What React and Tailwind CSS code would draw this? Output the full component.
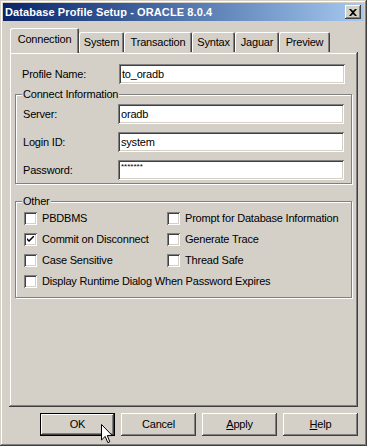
import React from "react";

// classic win2000 bevels
const raised =
  "shadow-[inset_-1px_-1px_#404040,inset_1px_1px_#d4d0c8,inset_-2px_-2px_#808080,inset_2px_2px_#ffffff]";
const btnRaised =
  "shadow-[inset_-1px_-1px_#404040,inset_1px_1px_#ffffff,inset_-2px_-2px_#808080,inset_2px_2px_#d4d0c8]";
const sunken =
  "shadow-[inset_1px_1px_#808080,inset_-1px_-1px_#ffffff,inset_2px_2px_#404040,inset_-2px_-2px_#d4d0c8]";

const tabs = [
  { label: "Connection", w: "w-[69px] ml-[1px]", active: true },
  { label: "System", w: "w-[45px]" },
  { label: "Transaction", w: "w-[68px]" },
  { label: "Syntax", w: "w-[43px]" },
  { label: "Jaguar", w: "w-[44px]" },
  { label: "Preview", w: "w-[51px]" },
];

function Field({ label, value, small, labelW = "w-[95px]" }) {
  return (
    <div className="flex items-center h-[20px]">
      <div className={`${labelW} shrink-0`}>{label}</div>
      <div className={`w-[226px] h-[20px] bg-white ${sunken} flex items-center pl-[3px]`}>
        {small ? (
          <span className="text-[8px] leading-none -mt-[6px] tracking-[0px]">{value}</span>
        ) : (
          <span>{value}</span>
        )}
      </div>
    </div>
  );
}

function Check({ label, checked, w = "w-[143px]" }) {
  return (
    <div className={`flex items-center ${w} shrink-0`}>
      <div className={`w-[13px] h-[13px] bg-white ${sunken} flex items-center justify-center shrink-0`}>
        {checked && (
          <svg width="7" height="7" viewBox="0 0 7 7">
            <path d="M0 2 L0 4 L2 6 L7 1 L7 -1 L2 4 Z" fill="#000" />
          </svg>
        )}
      </div>
      <span className="ml-[5px] whitespace-nowrap">{label}</span>
    </div>
  );
}

function Group({ title, children, className = "" }) {
  return (
    <div
      className={`ml-[6px] w-[337px] border border-[#808080] shadow-[1px_1px_0_#ffffff,inset_1px_1px_0_#ffffff] ${className}`}
    >
      <div className="-mt-[7px] ml-[6px] px-[1px] w-fit bg-[#d4d0c8] leading-[13px]">{title}</div>
      {children}
    </div>
  );
}

function Button({ children, def }) {
  if (def) {
    return (
      <div className="w-[75px] h-[23px] border border-black">
        <div className={`w-full h-full ${btnRaised} flex items-center justify-center`}>{children}</div>
      </div>
    );
  }
  return (
    <div className={`w-[75px] h-[23px] ${btnRaised} flex items-center justify-center`}>{children}</div>
  );
}

export default function App() {
  return (
    <div
      className={`relative w-[367px] h-[446px] bg-[#d4d0c8] ${raised} p-[3px] flex flex-col font-['Liberation_Sans',Arial,sans-serif] text-[11px] tracking-[-0.2px] text-black leading-[13px]`}
    >
      {/* title bar */}
      <div className="h-[18px] bg-linear-to-r from-[#0a246a] to-[#a6caf0] flex items-center justify-between pl-[2px] pr-[3px]">
        <span className="text-white font-bold text-[11px] tracking-[0.1px]">
          Database Profile Setup - ORACLE 8.0.4
        </span>
        <div className={`w-[16px] h-[14px] bg-[#d4d0c8] ${btnRaised} flex items-center justify-center`}>
          <svg width="8" height="7" viewBox="0 0 8 7">
            <path d="M0 0 L2 0 L4 2 L6 0 L8 0 L5 3.5 L8 7 L6 7 L4 5 L2 7 L0 7 L3 3.5 Z" fill="#000" />
          </svg>
        </div>
      </div>

      <div className="flex flex-col px-[6px]">
        {/* tabs */}
        <div className="relative z-10 -mb-[1px] mt-[7px] h-[25px] flex items-end">
          {tabs.map((t) =>
            t.active ? (
              <div
                key={t.label}
                className={`${t.w} h-[25px] bg-[#d4d0c8] shadow-[inset_1px_1px_#ffffff,inset_-1px_0_#404040,inset_-2px_0_#808080] rounded-t-[2px] flex items-start justify-center pt-[5px]`}
              >
                {t.label}
              </div>
            ) : (
              <div
                key={t.label}
                className={`${t.w} h-[20px] mb-[1px] shadow-[inset_1px_1px_#ffffff,inset_-1px_0_#404040,inset_-2px_0_#808080] rounded-t-[2px] flex items-start justify-center pt-[4px]`}
              >
                {t.label}
              </div>
            )
          )}
        </div>

        {/* panel */}
        <div className={`h-[355px] ${raised} flex flex-col pt-[12px]`}>
          <div className="pl-[13px]">
            <Field label="Profile Name:" value="to_oradb" labelW="w-[97px]" />
          </div>

          <Group title="Connect Information" className="mt-[10px] pb-[3px]">
            <div className="pl-[7px] mt-[3px] flex flex-col gap-[8px]">
              <Field label="Server:" value="oradb" />
              <Field label="Login ID:" value="system" />
              <Field label="Password:" value="*******" small />
            </div>
          </Group>

          <Group title="Other" className="mt-[17px] pb-[5px]">
            <div className="pl-[8px] flex flex-col">
              <div className="h-[21px] flex items-center">
                <Check label="PBDBMS" />
                <Check label="Prompt for Database Information" />
              </div>
              <div className="h-[21px] flex items-center">
                <Check label="Commit on Disconnect" checked />
                <Check label="Generate Trace" />
              </div>
              <div className="h-[21px] flex items-center">
                <Check label="Case Sensitive" />
                <Check label="Thread Safe" />
              </div>
              <div className="h-[21px] flex items-center">
                <Check label="Display Runtime Dialog When Password Expires" w="w-auto" />
              </div>
            </div>
          </Group>
        </div>

        {/* buttons */}
        <div className="mt-[6px] flex justify-end gap-[6px]">
          <Button def>OK</Button>
          <Button>Cancel</Button>
          <Button>
            <span>
              <span className="underline">A</span>pply
            </span>
          </Button>
          <Button>
            <span>
              <span className="underline">H</span>elp
            </span>
          </Button>
        </div>
      </div>

      {/* mouse pointer */}
      <svg className="absolute left-[101px] top-[424px]" width="12" height="20" viewBox="0 0 12 20">
        <path d="M0.5 0.5 L0.5 16 L4.2 12.4 L6.8 18.6 L8.8 17.8 L6.3 11.6 L11.3 11.6 Z" fill="#fff" stroke="#000" strokeWidth="1" />
      </svg>
    </div>
  );
}
